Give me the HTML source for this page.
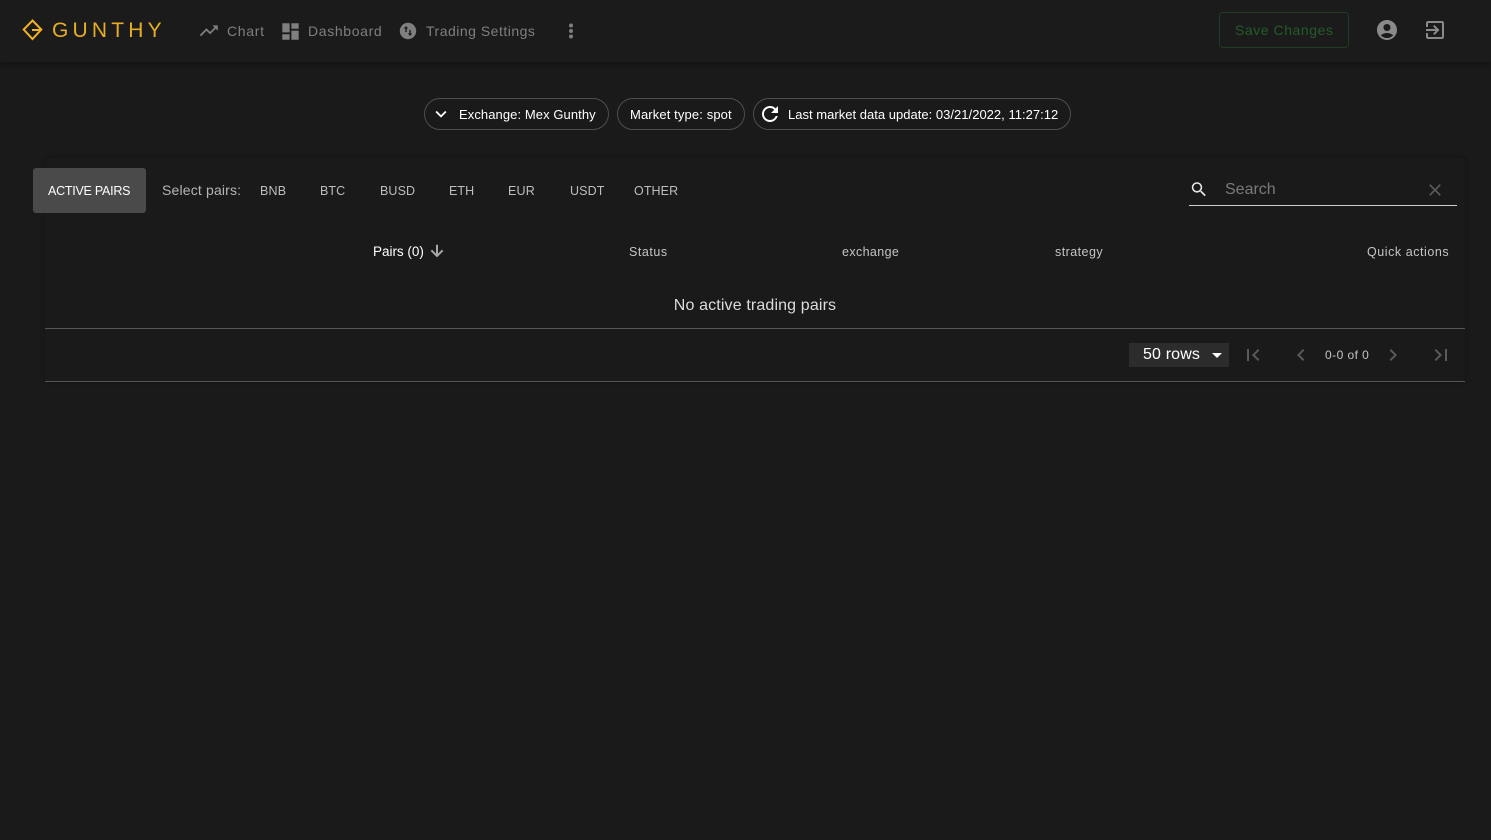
<!DOCTYPE html>
<html>
<head>
<meta charset="utf-8">
<style>
html,body{margin:0;padding:0;width:1491px;height:840px;overflow:hidden;background:#1a1a1a;font-family:"Liberation Sans",sans-serif}
.t{position:absolute;white-space:nowrap;line-height:20px}
svg{position:absolute;display:block}
#bar{position:absolute;left:0;top:0;width:1491px;height:62px;background:#1b1b1b;box-shadow:0 2px 5px rgba(0,0,0,.35)}
#card{position:absolute;left:45px;top:158px;width:1420px;height:224px;background:#1a1a1a;box-shadow:0 0 4px rgba(0,0,0,.35);border-radius:4px}
.nav{font-size:14px;color:#7f7f7f;letter-spacing:.7px}
.pill{position:absolute;top:98px;height:30px;border:1px solid #4e4e4e;border-radius:16px}
.pt{font-size:13px;color:#fff;top:105px;letter-spacing:.02px}
.tab{font-size:12.5px;color:#bdbdbd;top:181px;letter-spacing:.2px}
.th{font-size:12.5px;color:#c4c4c4;top:242px;letter-spacing:.45px}
.line{position:absolute;left:45px;width:1420px;height:1px;background:#555}
</style>
</head>
<body>
<div id="bar"></div>

<svg style="left:22px;top:19px" width="22" height="22" viewBox="0 0 22 22" fill="none" stroke="#f0b323" stroke-width="2"><path d="M10.5 1.5L19.3 10.5L10.5 20L1.7 10.5Z"/><path d="M10 11H18.5"/></svg>
<div class="t" style="left:52px;top:20px;font-size:21px;line-height:22px;color:#e6ad25;letter-spacing:4.2px;font-weight:normal">GUNTHY</div>

<svg style="left:198.2px;top:20.2px" width="21.6" height="21.6" viewBox="0 0 24 24" fill="#7f7f7f"><path d="M16 6l2.29 2.29-4.88 4.88-4-4L2 16.59 3.41 18l6-6 4 4 6.3-6.29L22 12V6z"/></svg>
<div class="t nav" style="left:227px;top:21px">Chart</div>

<svg style="left:278.5px;top:19.5px" width="23" height="23" viewBox="0 0 24 24" fill="#7f7f7f"><path d="M3 13h8V3H3v10zm0 8h8v-6H3v6zm10 0h8V11h-8v10zm0-18v6h8V3h-8z" transform="translate(0.6 0.6) scale(.95)"/></svg>
<div class="t nav" style="left:308px;top:21px;letter-spacing:.65px">Dashboard</div>

<svg style="left:398px;top:21px" width="20" height="20" viewBox="0 0 20 20"><circle cx="10" cy="10" r="8.2" fill="#7f7f7f"/><path d="M8 5L5.8 7.6H7.3V11H8.7V7.6H10.2Z M12 15L14.2 12.4H12.7V9H11.3V12.4H9.8Z" fill="#1b1b1b"/></svg>
<div class="t nav" style="left:426px;top:21px;letter-spacing:.5px">Trading Settings</div>

<svg style="left:559px;top:19px" width="24" height="24" viewBox="0 0 24 24" fill="#7f7f7f"><circle cx="12" cy="6.5" r="2"/><circle cx="12" cy="12" r="2"/><circle cx="12" cy="17.5" r="2"/></svg>

<div style="position:absolute;left:1219px;top:12px;width:128px;height:34px;border:1px solid #1f3d22;border-radius:4px"></div>
<div class="t" style="left:1235px;top:20px;font-size:14px;color:#245c2a;letter-spacing:.55px">Save Changes</div>

<svg style="left:1375px;top:18px" width="24" height="24" viewBox="0 0 24 24" fill="#8a8a8a"><path d="M12 2C6.48 2 2 6.48 2 12s4.48 10 10 10 10-4.48 10-10S17.52 2 12 2zm0 4c1.93 0 3.5 1.57 3.5 3.5S13.93 13 12 13s-3.5-1.57-3.5-3.5S10.07 6 12 6zm0 14c-2.03 0-4.43-.82-6.14-2.88C7.55 15.8 9.68 15 12 15s4.45.8 6.14 2.12C16.43 19.18 14.03 20 12 20z"/></svg>
<svg style="left:1423px;top:18px" width="24" height="24" viewBox="0 0 24 24" fill="#8a8a8a"><path d="M10.09 15.59L11.5 17l5-5-5-5-1.41 1.41L12.67 11H3v2h9.67l-2.58 2.59zM19 3H5c-1.11 0-2 .9-2 2v4h2V5h14v14H5v-4H3v4c0 1.1.89 2 2 2h14c1.1 0 2-.9 2-2V5c0-1.1-.9-2-2-2z"/></svg>

<div class="pill" style="left:424px;width:183px"></div>
<svg style="left:430px;top:103px" width="22" height="22" viewBox="0 0 24 24" fill="#fff"><path d="M7.41 8.59L12 13.17l4.59-4.58L18 10l-6 6-6-6z"/></svg>
<div class="t pt" style="left:459px;letter-spacing:.08px">Exchange: Mex Gunthy</div>

<div class="pill" style="left:617px;width:126px"></div>
<div class="t pt" style="left:630px;letter-spacing:.12px">Market type: spot</div>

<div class="pill" style="left:753px;width:316px"></div>
<svg style="left:758px;top:102px" width="24" height="24" viewBox="0 0 24 24" fill="#fff"><path d="M17.65 6.35C16.2 4.9 14.21 4 12 4c-4.42 0-7.99 3.58-7.99 8s3.57 8 7.99 8c3.73 0 6.84-2.55 7.73-6h-2.08c-.82 2.33-3.04 4-5.65 4-3.31 0-6-2.69-6-6s2.69-6 6-6c1.66 0 3.14.69 4.22 1.78L13 11h7V4l-2.35 2.35z"/></svg>
<div class="t pt" style="left:788px">Last market data update: 03/21/2022, 11:27:12</div>

<div id="card"></div>

<div style="position:absolute;left:33px;top:168px;width:113px;height:45px;background:#4a4a4a;border-radius:3px"></div>
<div class="t" style="left:48px;top:181px;font-size:12.5px;color:#fff;letter-spacing:-.25px">ACTIVE PAIRS</div>
<div class="t" style="left:162px;top:180px;font-size:14px;color:#b5b5b5;letter-spacing:.17px">Select pairs:</div>
<div class="t tab" style="left:260px">BNB</div>
<div class="t tab" style="left:320px;letter-spacing:.05px">BTC</div>
<div class="t tab" style="left:380px;letter-spacing:.1px">BUSD</div>
<div class="t tab" style="left:449px;letter-spacing:.05px">ETH</div>
<div class="t tab" style="left:508px">EUR</div>
<div class="t tab" style="left:570px;letter-spacing:.1px">USDT</div>
<div class="t tab" style="left:634px;letter-spacing:.1px">OTHER</div>

<svg style="left:1187px;top:178px" width="24" height="24" viewBox="0 0 24 24" fill="#e6e6e6"><path d="M15.5 14h-.79l-.28-.27C15.41 12.59 16 11.11 16 9.5 16 5.91 13.09 3 9.5 3S3 5.91 3 9.5 5.91 16 9.5 16c1.61 0 3.09-.59 4.23-1.57l.27.28v.79l5 4.99L20.49 19l-4.99-5zm-6 0C7.01 14 5 11.99 5 9.5S7.01 5 9.5 5 14 7.01 14 9.5 11.99 14 9.5 14z" transform="translate(2.4 1.8) scale(.8)"/></svg>
<div class="t" style="left:1225px;top:180px;font-size:16px;color:#7a7a7a">Search</div>
<svg style="left:1425px;top:180px" width="20" height="20" viewBox="0 0 24 24" fill="#5c5c5c"><path d="M19 6.41L17.59 5 12 10.59 6.41 5 5 6.41 10.59 12 5 17.59 6.41 19 12 13.41 17.59 19 19 17.59 13.41 12z"/></svg>
<div style="position:absolute;left:1189px;top:205px;width:268px;height:1px;background:#cfcfcf"></div>

<div class="t" style="left:373px;top:241.5px;font-size:13.5px;color:#fff;letter-spacing:-.02px">Pairs (0)</div>
<svg style="left:428px;top:242px" width="18" height="18" viewBox="0 0 24 24" fill="#a8a8a8" stroke="#a8a8a8" stroke-width=".7"><path d="M20 12l-1.41-1.41L13 16.17V4h-2v12.17l-5.58-5.59L4 12l8 8 8-8z"/></svg>
<div class="t th" style="left:629px;letter-spacing:.55px">Status</div>
<div class="t th" style="left:842px;letter-spacing:.38px">exchange</div>
<div class="t th" style="left:1055px">strategy</div>
<div class="t th" style="left:1367px;letter-spacing:.55px">Quick actions</div>

<div class="t" style="left:45px;width:1420px;text-align:center;top:296px;font-size:16px;color:#dcdcdc;letter-spacing:.14px">No active trading pairs</div>
<div class="line" style="top:328px"></div>

<div style="position:absolute;left:1129px;top:343px;width:100px;height:24px;background:#2c2c2c"></div>
<div class="t" style="left:1143px;top:345px;font-size:16px;color:#fff;letter-spacing:.15px">50 rows</div>
<svg style="left:1205px;top:343px" width="24" height="24" viewBox="0 0 24 24" fill="#fff"><path d="M7 10l5 5 5-5z"/></svg>

<svg style="left:1241px;top:343px" width="24" height="24" viewBox="0 0 24 24" fill="#5a5a5a"><path d="M18.41 16.59L13.82 12l4.59-4.59L17 6l-6 6 6 6zM6 6h2v12H6z"/></svg>
<svg style="left:1289px;top:343px" width="24" height="24" viewBox="0 0 24 24" fill="#5a5a5a"><path d="M15.41 7.41L14 6l-6 6 6 6 1.41-1.41L10.83 12z"/></svg>
<div class="t" style="left:1325px;top:345px;font-size:12px;color:#c4c4c4;letter-spacing:.45px">0-0 of 0</div>
<svg style="left:1381px;top:343px" width="24" height="24" viewBox="0 0 24 24" fill="#5a5a5a"><path d="M10 6L8.59 7.41 13.17 12l-4.58 4.59L10 18l6-6z"/></svg>
<svg style="left:1429px;top:343px" width="24" height="24" viewBox="0 0 24 24" fill="#5a5a5a"><path d="M5.59 7.41L10.18 12l-4.59 4.59L7 18l6-6-6-6zM16 6h2v12h-2z"/></svg>

<div class="line" style="top:381px"></div>
</body>
</html>
